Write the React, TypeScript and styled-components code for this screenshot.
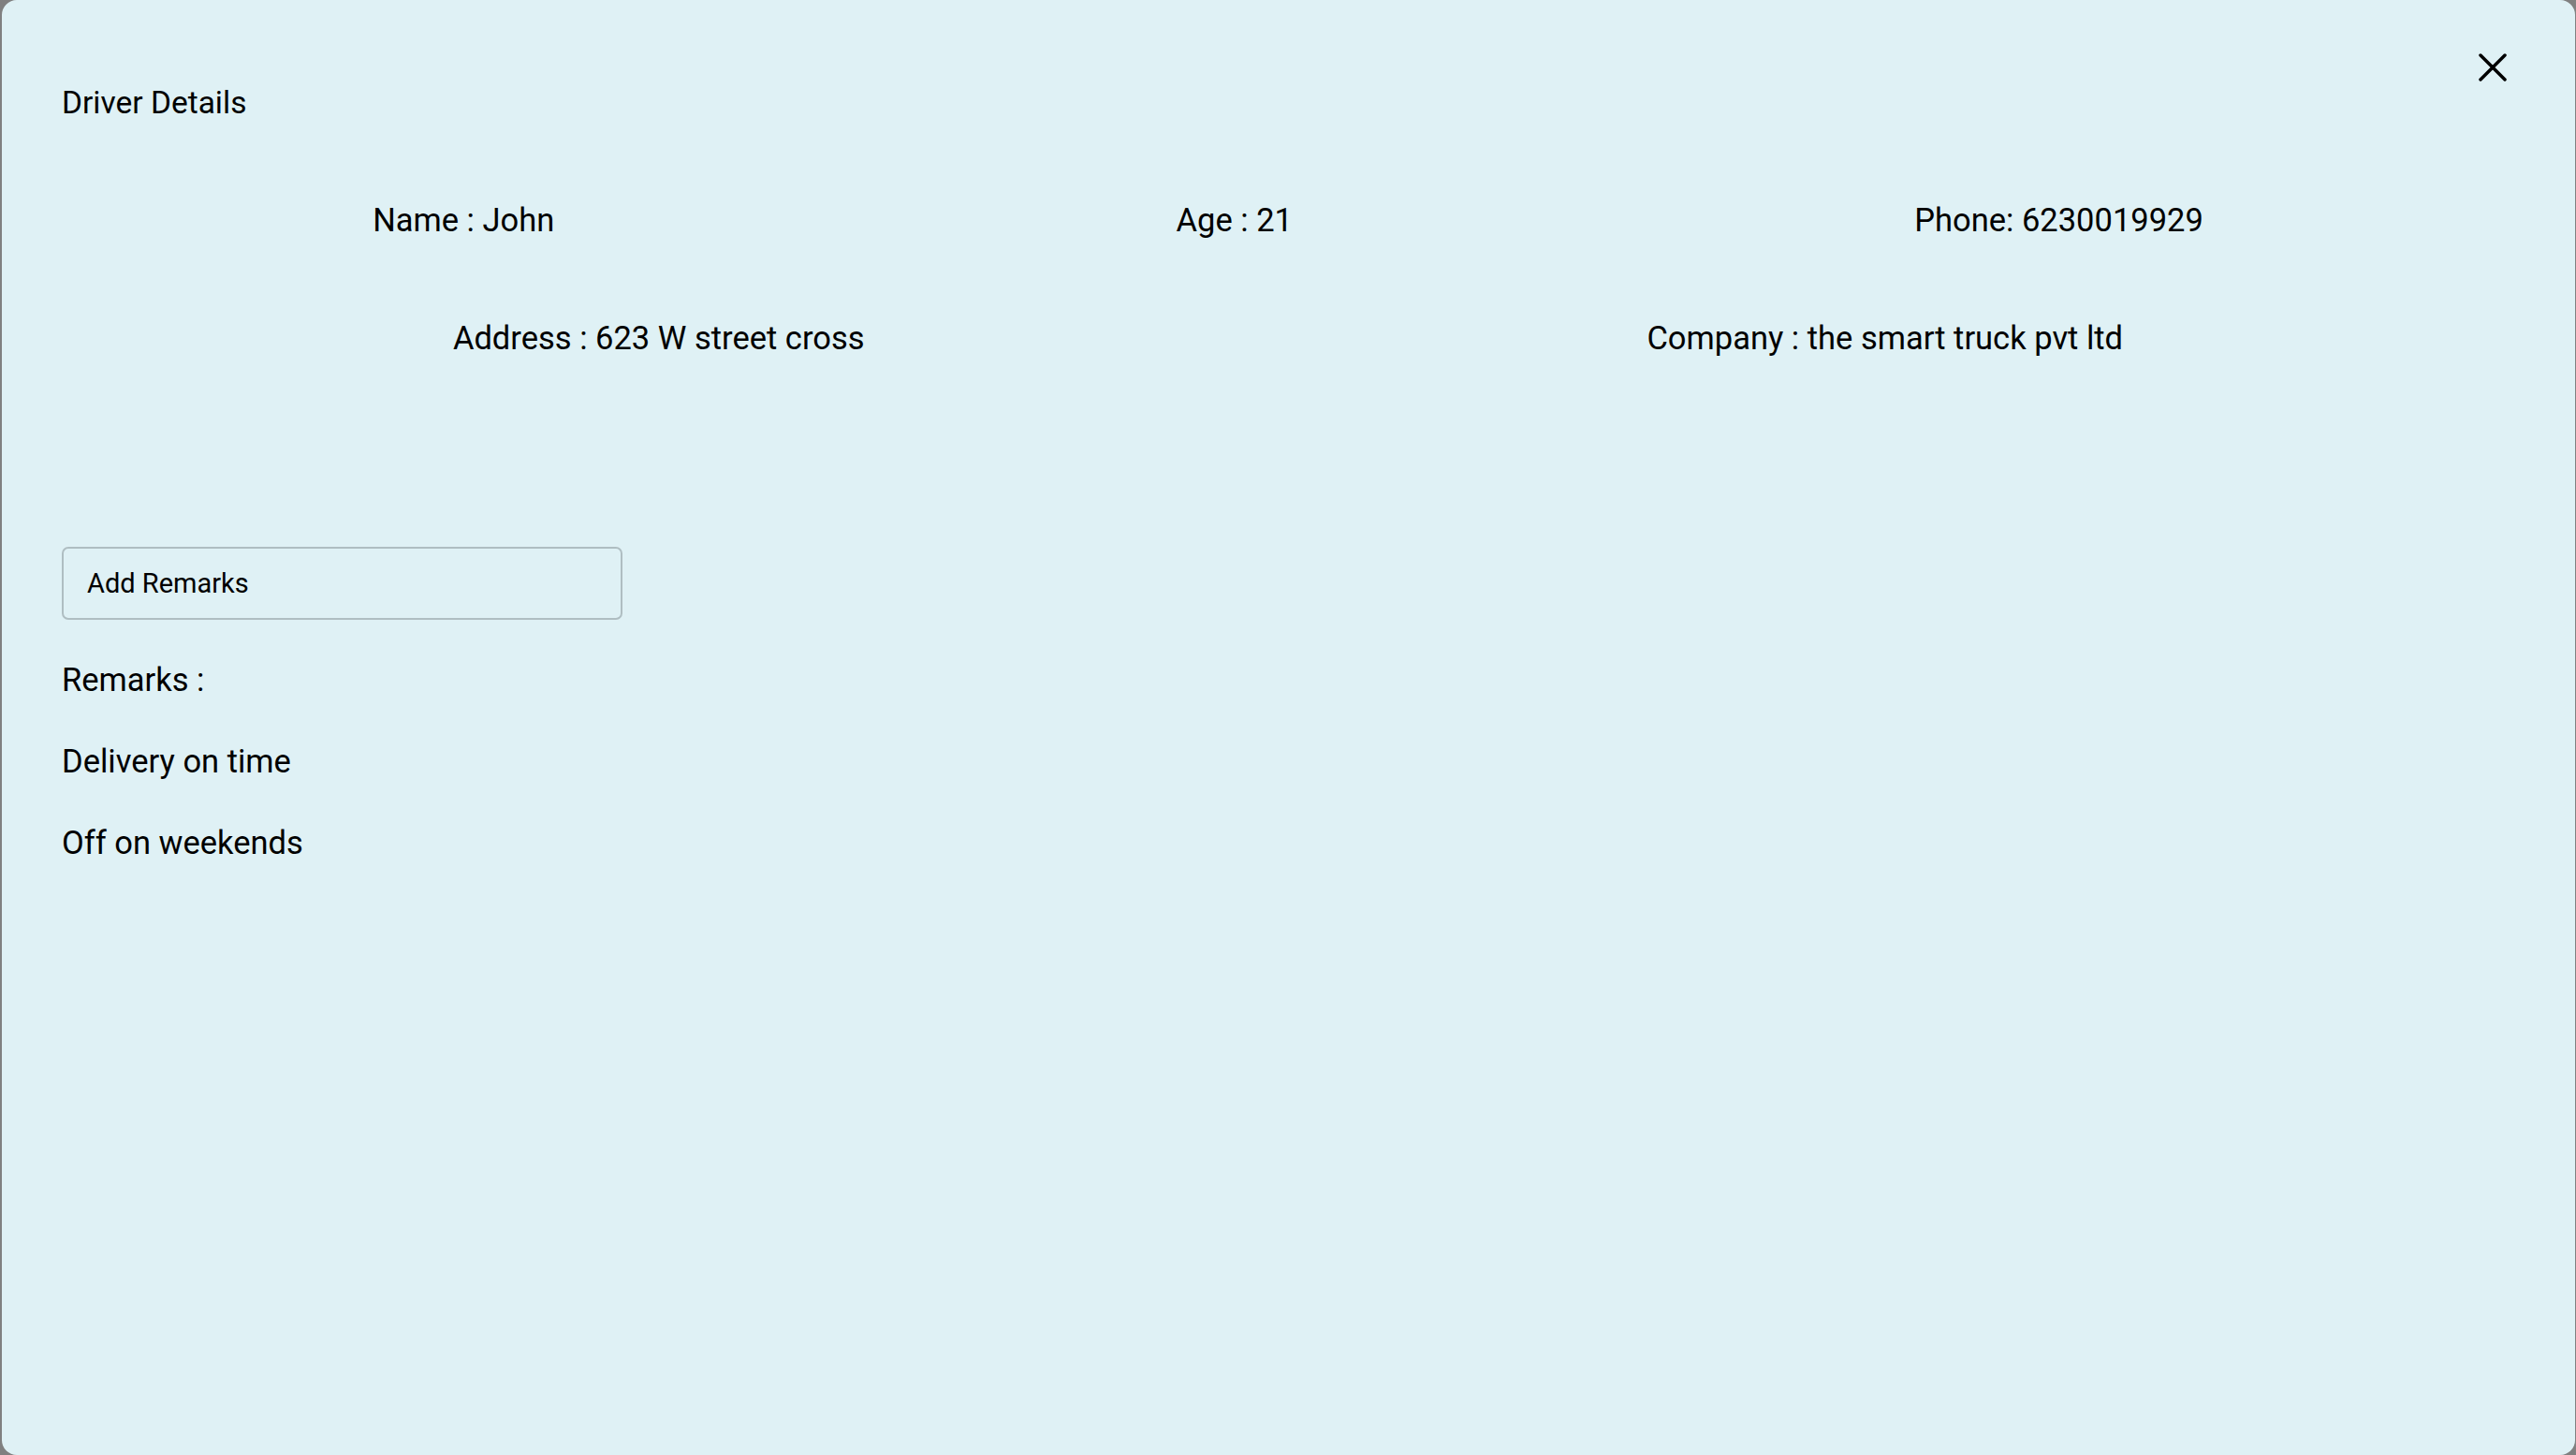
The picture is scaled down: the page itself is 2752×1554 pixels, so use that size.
import React from "react";
import styled, { createGlobalStyle } from "styled-components";

const GlobalStyle = createGlobalStyle`
  html, body {
    margin: 0;
    padding: 0;
    background: #808080;
    font-family: Roboto, "Noto Sans", "Liberation Sans", sans-serif;
    color: #000;
  }
  * { box-sizing: border-box; }
`;

const Backdrop = styled.div`
  width: 2752px;
  height: 1554px;
  padding: 0 1px 0 2px;
  background: #808080;
`;

const Dialog = styled.section`
  position: relative;
  height: 100%;
  background: #dff1f5;
  border-radius: 16px;
  padding: 0 65px 0 64px;
  display: flex;
  flex-direction: column;
`;

const CloseButton = styled.button`
  position: absolute;
  top: 56px;
  right: 72px;
  width: 32px;
  height: 32px;
  padding: 0;
  border: none;
  background: transparent;
  display: flex;
  align-items: center;
  justify-content: center;
  cursor: pointer;
`;

const Title = styled.h2`
  margin: 90px 0 0;
  font-size: 33.5px;
  line-height: 40px;
  font-weight: 400;
`;

const InfoRow = styled.div<{ $top: number }>`
  margin-top: ${(p) => p.$top}px;
  display: flex;
  justify-content: space-around;
  align-items: center;
`;

const InfoItem = styled.span`
  font-size: 34.5px;
  line-height: 42px;
  white-space: nowrap;
`;

const RemarkInput = styled.input`
  margin-top: 202px;
  width: 599px;
  height: 78px;
  border: 2px solid #afbec2;
  border-radius: 7px;
  background: transparent;
  padding: 0 20px 0 25px;
  font-family: inherit;
  font-size: 29px;
  color: #000;
  outline: none;
  &::placeholder {
    color: #000;
    opacity: 1;
  }
`;

const RemarksList = styled.div`
  margin-top: 44px;
  display: flex;
  flex-direction: column;
  gap: 47px;
`;

const RemarkLine = styled.p`
  margin: 0;
  font-size: 34.5px;
  line-height: 40px;
`;

const CloseIcon = () => (
  <svg width="30" height="30" viewBox="0 0 30 30" aria-hidden="true">
    <path
      d="M2 2 L28 28 M28 2 L2 28"
      stroke="#000"
      strokeWidth="3.5"
      strokeLinecap="round"
      fill="none"
    />
  </svg>
);

const remarks = ["Delivery on time", "Off on weekends"];

export default function App() {
  return (
    <>
      <GlobalStyle />
      <Backdrop>
        <Dialog>
          <CloseButton aria-label="Close">
            <CloseIcon />
          </CloseButton>
          <Title>Driver Details</Title>
          <InfoRow $top={84}>
            <InfoItem>Name : John</InfoItem>
            <InfoItem>Age : 21</InfoItem>
            <InfoItem>Phone: 6230019929</InfoItem>
          </InfoRow>
          <InfoRow $top={84}>
            <InfoItem>Address : 623 W street cross</InfoItem>
            <InfoItem>Company : the smart truck pvt ltd</InfoItem>
          </InfoRow>
          <RemarkInput placeholder="Add Remarks" />
          <RemarksList>
            <RemarkLine>Remarks :</RemarkLine>
            {remarks.map((r) => (
              <RemarkLine key={r}>{r}</RemarkLine>
            ))}
          </RemarksList>
        </Dialog>
      </Backdrop>
    </>
  );
}
